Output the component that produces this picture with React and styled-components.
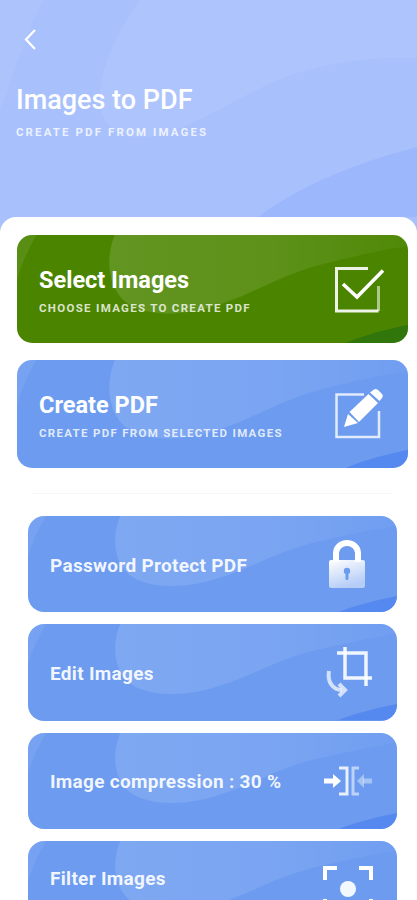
import React from 'react';
import styled, { createGlobalStyle } from 'styled-components';

const GlobalStyle = createGlobalStyle`
  html, body {
    margin: 0;
    padding: 0;
    background: #a8c0fc;
  }
  * {
    box-sizing: border-box;
  }
`

const Page = styled.div`
  width: 417px;
  height: 900px;
  overflow: hidden;
  display: flex;
  flex-direction: column;
  background: #a8c0fc;
  font-family: Roboto, "Liberation Sans", sans-serif;
  color: #fff;
`

const Header = styled.header`
  position: relative;
  flex: 0 0 217px;
  padding: 28px 0 0 16px;
  display: flex;
  flex-direction: column;
`

const BackButton = styled.button`
  position: relative;
  align-self: flex-start;
  width: 14px;
  height: 24px;
  margin: 0 0 31px 7px;
  padding: 0;
  border: 0;
  background: none;
  cursor: pointer;
`

const PageTitle = styled.h1`
  position: relative;
  margin: 0;
  font-size: 27px;
  line-height: 34px;
  font-weight: 500;
  color: #fff;
`

const PageSubtitle = styled.p`
  position: relative;
  margin: 8px 0 0;
  font-size: 11.5px;
  line-height: 14px;
  font-weight: 700;
  letter-spacing: 2.1px;
  color: rgba(255, 255, 255, 0.8);
`

const Sheet = styled.main`
  flex: 1;
  background: #fff;
  border-radius: 16px 16px 0 0;
  padding: 18px 9px 0 17px;
`

const HeroList = styled.div`
  display: flex;
  flex-direction: column;
  gap: 17px;
`

const Card = styled.div`
  position: relative;
  overflow: hidden;
  display: flex;
  align-items: center;
  justify-content: space-between;
  padding: 0 24px 0 22px;
  height: ${({ $hero }) => ($hero ? '108px' : '96.33px')};
  border-radius: ${({ $hero }) => ($hero ? '15px' : '16px')};
  background: ${({ $green }) => ($green ? '#4b8500' : '#6c9bf0')};
`

const CardText = styled.div`
  position: relative;
  display: flex;
  flex-direction: column;
  padding-top: 2px;
`

const CardTitle = styled.span`
  font-size: 23.5px;
  line-height: 30px;
  font-weight: 700;
`

const CardSubtitle = styled.span`
  margin-top: 6px;
  font-size: 11.5px;
  line-height: 14px;
  font-weight: 700;
  letter-spacing: 1.3px;
  color: rgba(255, 255, 255, 0.8);
`

const RowLabel = styled.span`
  position: relative;
  margin: ${({ $raised }) => ($raised ? '0 0 20px' : '3px 0 0')};
  font-size: 19px;
  line-height: 24px;
  font-weight: 700;
  letter-spacing: 0.3px;
  color: rgba(255, 255, 255, 0.92);
`

const Divider = styled.hr`
  height: 1px;
  margin: 25px 15px 22px;
  border: 0;
  background: #f6f7f9;
`

const RowList = styled.div`
  display: flex;
  flex-direction: column;
  gap: 12px;
  margin: 0 11px;
`

const Waves = styled.svg`
  position: absolute;
  inset: 0;
  width: 100%;
  height: 100%;
`

const Icon = styled.svg`
  position: relative;
  flex: none;
  fill: none;
  stroke: #fff;
`

function HeaderWaves() {
  return (
    <Waves viewBox="0 0 417 217" preserveAspectRatio="none">
      <path d="M0 0H43C28 30 12 75 0 112Z" fill="rgba(255,255,255,0.05)" />
      <path d="M140 0C112 40 98 75 100 105C103 135 135 145 170 132C215 116 250 88 300 72C340 60 385 57 417 58V0Z" fill="rgba(255,255,255,0.07)" />
      <path d="M258 217C300 185 360 162 417 147V217Z" fill="rgba(120,155,250,0.25)" />
    </Waves>
  )
}

function CardWaves({ green }) {
  const id = green ? 'blobGreen' : 'blobBlue'
  return (
    <Waves viewBox="0 0 100 100" preserveAspectRatio="none">
      <defs>
        <linearGradient id={id} x1="0" y1="0" x2="1" y2="0">
          <stop offset="0" stopColor="#fff" stopOpacity="0.13" />
          <stop offset="0.55" stopColor="#fff" stopOpacity="0.1" />
          <stop offset="1" stopColor="#fff" stopOpacity="0.03" />
        </linearGradient>
      </defs>
      <path d="M0 0H5C3 12 1 28 0 42Z" fill="rgba(255,255,255,0.08)" />
      <path d="M25 0C23 18 23 40 26 55C29 72 38 76 46 70C58 61 66 38 78 27C86 20 93 14 100 10V0Z" fill={`url(#${id})`} />
      <path d="M84 100C89 92 95 87 100 83V100Z" fill={green ? 'rgba(30,105,20,0.55)' : 'rgba(70,125,238,0.6)'} />
    </Waves>
  )
}

function CheckIcon() {
  return (
    <Icon width="50" height="50" viewBox="0 0 50 50" strokeWidth="3">
      <path d="M34 4.5H2.5V47H44.5" opacity="0.9" />
      <path d="M44.5 47V22" opacity="0.55" />
      <path d="M9 20L23 33L49 6.5" strokeWidth="3.5" />
    </Icon>
  )
}

function EditIcon() {
  return (
    <Icon width="50" height="50" viewBox="0 0 50 50" strokeWidth="2.5">
      <path d="M30 5.5H2.5V48H45V22" opacity="0.8" />
      <path d="M10 38L14 25L24 34Z M15.5 23L34.5 5L44 14L25 33Z M36 3.5L40 0.5Q42 -0.5 44 1L48 5Q49.5 7 48 9L45.5 12Z" fill="#fff" stroke="none" />
    </Icon>
  )
}

function LockIcon() {
  return (
    <Icon width="50" height="52" viewBox="0 0 50 52">
      <defs>
        <linearGradient id="lockFill" x1="0" y1="0" x2="0.4" y2="1">
          <stop offset="0" stopColor="#fff" />
          <stop offset="1" stopColor="#fff" stopOpacity="0.5" />
        </linearGradient>
      </defs>
      <path d="M13 24V15A11 10 0 0 1 35 15V24" strokeWidth="6" />
      <rect x="6" y="22" width="36" height="28" rx="2" fill="url(#lockFill)" stroke="none" />
      <circle cx="24" cy="33" r="3.2" fill="#6c9bf0" stroke="none" />
      <rect x="22.5" y="33" width="3" height="9" rx="1.5" fill="#6c9bf0" stroke="none" />
    </Icon>
  )
}

function CropIcon() {
  return (
    <Icon width="50" height="52" viewBox="0 0 50 52" strokeWidth="3.5">
      <path d="M22 1V32H49" opacity="0.9" />
      <path d="M14 7H43V40" opacity="0.9" />
      <path d="M6 25C4 36 10 44 19 44" strokeWidth="4" opacity="0.7" />
      <path d="M16 38L22 44L16 50" strokeWidth="4" opacity="0.7" />
    </Icon>
  )
}

function CompressIcon() {
  return (
    <Icon width="50" height="52" viewBox="0 0 50 52">
      <path d="M1 26H11" strokeWidth="5" />
      <path d="M10 19L18 26L10 33Z" fill="#fff" stroke="none" />
      <path d="M16 13H24V39H16" strokeWidth="3" opacity="0.85" />
      <path d="M36 13H30V39H36" strokeWidth="3" opacity="0.55" />
      <path d="M49 26H40" strokeWidth="5" opacity="0.4" />
      <path d="M41 19L34 26L41 33Z" fill="#fff" stroke="none" opacity="0.4" />
    </Icon>
  )
}

function FocusIcon() {
  return (
    <Icon width="50" height="52" viewBox="0 0 50 52" strokeWidth="4">
      <path d="M2 17V5H14" />
      <path d="M36 5H48V17" />
      <path d="M2 36V48H14" />
      <path d="M36 48H48V36" />
      <circle cx="25" cy="26" r="8" fill="#fff" stroke="none" opacity="0.92" />
    </Icon>
  )
}

const heroCards = [
  { title: 'Select Images', subtitle: 'CHOOSE IMAGES TO CREATE PDF', green: true, icon: <CheckIcon /> },
  { title: 'Create PDF', subtitle: 'CREATE PDF FROM SELECTED IMAGES', icon: <EditIcon /> },
]

const rows = [
  { label: 'Password Protect PDF', icon: <LockIcon /> },
  { label: 'Edit Images', icon: <CropIcon /> },
  { label: 'Image compression : 30 %', icon: <CompressIcon /> },
  { label: 'Filter Images', icon: <FocusIcon />, raised: true },
]

export default function App() {
  return (
    <Page>
      <GlobalStyle />
      <Header>
        <HeaderWaves />
        <BackButton aria-label="Back">
          <svg width="14" height="24" viewBox="0 0 14 24" fill="none" stroke="#fff" strokeWidth="2.2">
            <path d="M12 2L3 11.5L12 21" />
          </svg>
        </BackButton>
        <PageTitle>Images to PDF</PageTitle>
        <PageSubtitle>CREATE PDF FROM IMAGES</PageSubtitle>
      </Header>
      <Sheet>
        <HeroList>
          {heroCards.map((card) => (
            <Card $hero $green={card.green} key={card.title}>
              <CardWaves green={card.green} />
              <CardText>
                <CardTitle>{card.title}</CardTitle>
                <CardSubtitle>{card.subtitle}</CardSubtitle>
              </CardText>
              {card.icon}
            </Card>
          ))}
        </HeroList>
        <Divider />
        <RowList>
          {rows.map((row) => (
            <Card key={row.label}>
              <CardWaves />
              <RowLabel $raised={row.raised}>{row.label}</RowLabel>
              {row.icon}
            </Card>
          ))}
        </RowList>
      </Sheet>
    </Page>
  )
}
